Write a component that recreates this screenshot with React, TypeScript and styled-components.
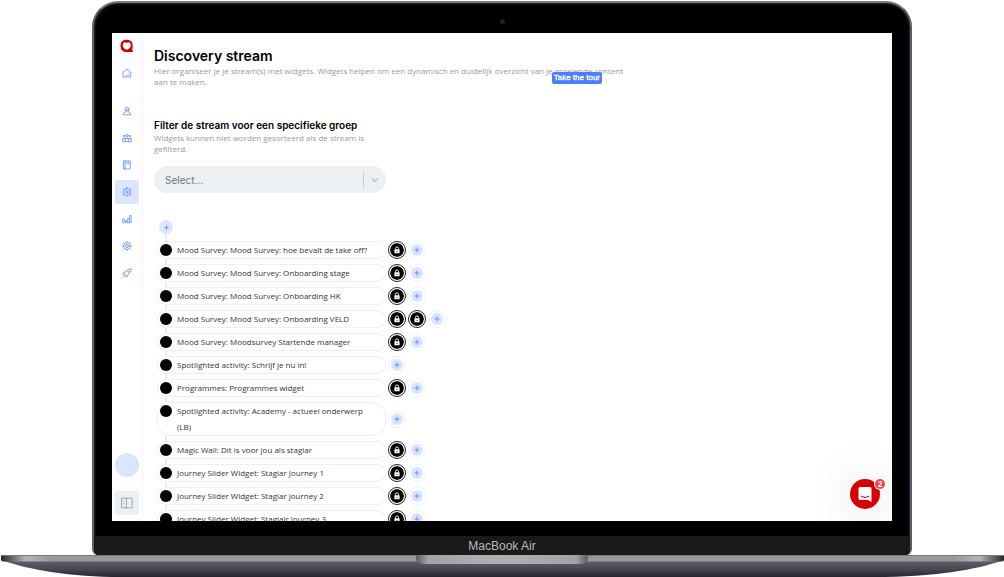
import React from "react";
import styled, { createGlobalStyle, css } from "styled-components";

const GlobalStyle = createGlobalStyle`
  *, *::before, *::after { box-sizing: border-box; }
  body {
    margin: 0;
    background: #fff;
    color: #000;
    font-family: Inter, "Open Sans", sans-serif;
    overflow: hidden;
  }
  h1, h2, p, ul { margin: 0; padding: 0; }
  button, select { font-family: inherit; }
`;

const Laptop = styled.div`
  padding-top: 1px;
`;

const Lid = styled.div`
  margin: 0 92px;
  overflow: hidden;
  background: #000;
  border: 2px solid #5d5e66;
  border-top-color: #77797d;
  border-bottom: 0;
  border-radius: 26px 26px 6px 6px;
  box-shadow: inset 0 0 2px 1px #2b2c31;
`;

const CameraBar = styled.div`
  display: flex;
  align-items: center;
  justify-content: center;
  height: 30px;
  padding-top: 7px;
`;

const Camera = styled.span`
  width: 5px;
  height: 5px;
  border-radius: 50%;
  background: #1d1f26;
`;

const Screen = styled.div`
  position: relative;
  display: grid;
  grid-template-columns: 31px minmax(0, 1fr);
  grid-template-rows: minmax(0, 1fr);
  margin: 0 18px 15px;
  aspect-ratio: 780 / 488;
  overflow: hidden;
  background: #fff;
`;

const Chin = styled.div`
  display: flex;
  align-items: center;
  justify-content: center;
  height: 19px;
  background: #1a1a1a;
  color: #b9b9bd;
  font: 12px/20px "Liberation Sans", sans-serif;
`;

const BaseArt = styled.svg`
  display: block;
  width: 100%;
  height: 22px;
`;

const Sidebar = styled.aside`
  display: flex;
  flex-direction: column;
  align-items: center;
  min-height: 0;
  padding: 6px 1px 6px 0;
  border-right: 1px solid #f6f6f9;
`;

const Logo = styled.a`
  display: flex;
  height: 16px;
  margin-bottom: 6px;
`;

const Nav = styled.nav`
  display: flex;
  flex-direction: column;
  gap: 3px;
`;

const NavButton = styled.a<{ $active?: boolean; $apart?: boolean }>`
  display: flex;
  align-items: center;
  justify-content: center;
  width: 24px;
  height: 24px;
  border-radius: 3px;
  color: #7b9cff;
  ${(p) => p.$active && css`background: #dbe5ff;`}
  ${(p) => p.$apart && css`margin-bottom: 11px;`}
`;

const SidebarFoot = styled.div`
  display: flex;
  flex-direction: column;
  gap: 14px;
  margin-top: auto;
`;

const Avatar = styled.button`
  width: 24px;
  height: 24px;
  padding: 0;
  border: 0;
  border-radius: 50%;
  background: #dbe5ff;
`;

const CollapseButton = styled.button`
  display: flex;
  align-items: center;
  justify-content: center;
  width: 24px;
  height: 24px;
  padding: 0;
  border: 0;
  border-radius: 3px;
  background: #ecf0f3;
  color: #9a9da1;
`;

const Main = styled.main`
  display: flex;
  flex-direction: column;
  align-items: flex-start;
  min-height: 0;
  padding: 13px 11px 0;
`;

const Title = styled.h1`
  font-size: 14px;
  font-weight: 600;
  line-height: 19px;
`;

const Intro = styled.div`
  position: relative;
  max-width: 476px;
  margin-bottom: 31px;
`;

const Note = styled.p`
  color: #999;
  font-family: "Open Sans", sans-serif;
  font-size: 8px;
  line-height: 11px;
`;

const TourButton = styled.button`
  position: absolute;
  right: 28px;
  bottom: 3px;
  height: 12px;
  padding: 0 2px;
  border: 0;
  border-radius: 2px;
  background: #4a7dff;
  color: #fff;
  font: 8px/12px "Liberation Sans", sans-serif;
  -webkit-text-stroke: 0.3px #fff;
  white-space: nowrap;
`;

const FilterBlock = styled.section`
  width: 232px;
  margin-bottom: 27px;
`;

const FilterTitle = styled.label`
  display: block;
  font-size: 10px;
  font-weight: 600;
  line-height: 14px;
  white-space: nowrap;
`;

const SelectWrap = styled.div`
  position: relative;
  margin-top: 12px;
`;

const Select = styled.select`
  display: block;
  width: 100%;
  height: 27px;
  padding: 0 30px 0 11px;
  border: 0;
  border-radius: 14px;
  appearance: none;
  background: #ecf0f3;
  color: #777;
  font-size: 10px;
`;

const SelectMark = styled.span`
  position: absolute;
  top: 5px;
  right: 0;
  display: flex;
  align-items: center;
  justify-content: center;
  width: 23px;
  height: 18px;
  border-left: 1px solid #ccc;
  color: #bbb;
  pointer-events: none;
`;

const Stream = styled.div`
  display: flex;
  flex-direction: column;
  align-items: flex-start;
  padding-left: 3px;
`;

const FirstAdd = styled.button`
  display: flex;
  align-items: center;
  justify-content: center;
  width: 14px;
  height: 14px;
  margin-left: 2px;
  padding: 0;
  border: 0;
  border-radius: 50%;
  background: #dbe5ff;
  color: #5b84ff;
`;

const Rows = styled.ul`
  list-style: none;
`;

const Row = styled.li`
  display: flex;
  align-items: center;
  gap: 2px;
`;

const PillColumn = styled.div`
  width: 229px;

  &::before {
    content: "";
    display: block;
    width: 2px;
    height: 5px;
    margin-left: 8px;
    background: #e3ebff;
  }

  li:first-child > &::before {
    height: 7px;
  }
`;

const Pill = styled.div`
  display: flex;
  gap: 5px;
  padding: 0 12px 0 2px;
  border: 1px solid #e9effe;
  border-radius: 14px;
  background: #fff;
  color: #333;
  font-family: "Open Sans", sans-serif;
  font-size: 8px;
  line-height: 16px;
`;

const Dot = styled.span`
  flex: none;
  width: 12px;
  height: 12px;
  margin-top: 2px;
  border-radius: 50%;
  background: #000;
`;

const RoundButton = styled.button<{ $locked?: boolean }>`
  display: flex;
  flex: none;
  align-items: center;
  justify-content: center;
  width: 18px;
  height: 18px;
  margin-top: 5px;
  border: 1px solid ${(p) => (p.$locked ? "#222" : "#eef3ff")};
  border-radius: 50%;
  background: ${(p) => (p.$locked ? "#000" : "#dbe5ff")};
  background-clip: content-box;
  box-shadow: inset 0 0 0 1px #fff;
  padding: ${(p) => (p.$locked ? "1px" : "2px")};
  color: ${(p) => (p.$locked ? "#fff" : "#6b90ff")};

  li:first-child > & {
    margin-top: 7px;
  }
`;

const Launcher = styled.button`
  position: absolute;
  right: 12px;
  bottom: 12px;
  display: flex;
  align-items: center;
  justify-content: center;
  width: 30px;
  height: 30px;
  padding: 0;
  border: 0;
  border-radius: 50%;
  background: #d60000;
  box-shadow: 0 1px 40px 10px rgba(0, 0, 0, 0.07);
`;

const Badge = styled.span`
  position: absolute;
  top: 0;
  right: -5px;
  width: 10px;
  height: 10px;
  border-radius: 50%;
  background: #ff3d47;
  box-shadow: 0 0 0 1px #fff;
  color: #fff;
  font: bold 8px/10px "Open Sans", sans-serif;
  text-align: center;
`;

const Stroke = ({ size = 10, children }: { size?: number; children: React.ReactNode }) => (
  <svg
    width={size}
    height={size}
    viewBox="0 0 20 20"
    fill="none"
    stroke="currentColor"
    strokeWidth="2"
    strokeLinejoin="round"
    strokeLinecap="round"
    aria-hidden
  >
    {children}
  </svg>
);

const PlusIcon = ({ size }: { size: number }) => (
  <svg width={size} height={size} viewBox="0 0 8 8" stroke="currentColor" strokeWidth="1.3" aria-hidden>
    <path d="M4 .5v7M.5 4h7" />
  </svg>
);

const LockIcon = () => (
  <svg width="8" height="8" viewBox="0 0 16 16" aria-hidden>
    <path d="M5 7V4.800a3 3 0 0 1 6 0V7" fill="none" stroke="currentColor" strokeWidth="1.800" />
    <rect x="2.800" y="6.600" width="10.400" height="8" rx="1" fill="currentColor" />
    <circle cx="8" cy="10.500" r="1.200" fill="#000" />
  </svg>
);

const navItems = [
  { name: "Home", apart: true, icon: <><path d="M2.500 8.500 10 2l7.500 6.500V18h-15z" /><path d="M14 9v6H7" strokeWidth="1.200" /></> },
  { name: "Users", icon: <><circle cx="10" cy="6.500" r="4" /><path d="M7 11v1.500c-3 .5-5 2-5 5h16c0-3-2-4.500-5-5V11M8 7.500h4" /></> },
  { name: "Groups", icon: <><circle cx="10" cy="5.500" r="2.500" /><circle cx="4" cy="6" r="1.500" /><circle cx="16" cy="6" r="1.500" /><path d="M1.500 16.500V11h17v5.500zM6.500 16v-5M13.500 16v-5" /></> },
  { name: "Library", icon: <><path d="M3.500 2h13v16h-13zM6 2v16" /><path d="M9.500 3v5l2-1.500 2 1.500V3" strokeWidth="1.600" /></> },
  { name: "Discovery stream", active: true, icon: <><path d="m10 1.500 2.500 3.300 4.300-.8-.8 4 2.500 2-2.500 2 .8 4-4.300-.8L10 18.500l-2.500-3.300-4.300.8.800-4-2.500-2L4 8l-.8-4 4.300.8z" /><circle cx="10" cy="10" r="2.500" /></> },
  { name: "Statistics", icon: <path d="M1.500 10h3v7.500h-3zM7 13h2.500v4.500H7zM12 8.500h2.500v9H12zM16 3h2.500v14.500H16z" strokeWidth="1.800" /> },
  { name: "Settings", icon: <><circle cx="10" cy="10" r="7" /><circle cx="10" cy="10" r="3" /><path d="M10 1v2M10 17v2M1 10h2M17 10h2M3.600 3.600 5 5M15 15l1.400 1.400M3.600 16.400 5 15M15 5l1.400-1.400" /></> },
  { name: "Launch", icon: <><path d="M18 2c-5 0-8 2-10.500 6L4 8.500 2 12l4 .5 1.500 1.500L8 18l3.500-2 .5-3.500C16 10 18 7 18 2z" /><circle cx="12.500" cy="7.500" r="1.200" strokeWidth="1.500" /><path d="m2 18 2.500-2.500" /></> },
];

const widgets = [
  { text: "Mood Survey: Mood Survey: hoe bevalt de take off?", locks: 1 },
  { text: "Mood Survey: Mood Survey: Onboarding stage", locks: 1 },
  { text: "Mood Survey: Mood Survey: Onboarding HK", locks: 1 },
  { text: "Mood Survey: Mood Survey: Onboarding VELD", locks: 2 },
  { text: "Mood Survey: Moodsurvey Startende manager", locks: 1 },
  { text: "Spotlighted activity: Schrijf je nu in!", locks: 0 },
  { text: "Programmes: Programmes widget", locks: 1 },
  { text: "Spotlighted activity: Academy - actueel onderwerp (LB)", locks: 0 },
  { text: "Magic Wall: Dit is voor jou als stagiar", locks: 1 },
  { text: "Journey Slider Widget: Stagiar Journey 1", locks: 1 },
  { text: "Journey Slider Widget: Stagiar journey 2", locks: 1 },
  { text: "Journey Slider Widget: Stagiair Journey 3", locks: 1 },
];

const LaptopBase = () => (
  <BaseArt viewBox="0 0 1004 22" preserveAspectRatio="none" aria-hidden>
    <defs>
      <linearGradient id="under" x1="0" y1="0" x2="0" y2="1">
        <stop offset="0" stopColor="#60616a" />
        <stop offset="0.5" stopColor="#494a55" />
        <stop offset="1" stopColor="#25262f" />
      </linearGradient>
      <linearGradient id="deck" x1="0" y1="0" x2="1" y2="0">
        <stop offset="0" stopColor="#24252b" />
        <stop offset="0.008" stopColor="#55565d" />
        <stop offset="0.024" stopColor="#b4b4b9" />
        <stop offset="0.05" stopColor="#97989e" />
        <stop offset="0.95" stopColor="#97989e" />
        <stop offset="0.976" stopColor="#b4b4b9" />
        <stop offset="0.992" stopColor="#55565d" />
        <stop offset="1" stopColor="#24252b" />
      </linearGradient>
      <linearGradient id="notch" x1="0" y1="0" x2="1" y2="0">
        <stop offset="0" stopColor="#5b5b61" />
        <stop offset="0.07" stopColor="#a3a3a8" />
        <stop offset="0.5" stopColor="#b0b0b4" />
        <stop offset="0.93" stopColor="#a3a3a8" />
        <stop offset="1" stopColor="#5b5b61" />
      </linearGradient>
    </defs>
    <path d="M1 5h1003c-28 10-70 17-130 17H121C71 22 29 15 1 5z" fill="url(#under)" />
    <path d="M1 0h1003v5.500l-2 1H3l-2-1z" fill="url(#deck)" />
    <path d="M1 .5h1003" stroke="#77787e" />
    <path d="M416 0h172v3c0 4-3 6-9 6H425c-6 0-9-2-9-6z" fill="url(#notch)" />
  </BaseArt>
);

export default function App() {
  return (
    <Laptop>
      <GlobalStyle />
      <Lid>
        <CameraBar><Camera /></CameraBar>
        <Screen>
          <Sidebar>
            <Logo href="#" aria-label="Start">
              <svg width="14" height="14" viewBox="0 0 28 28" aria-hidden>
                <path d="M13 1.500C5 1.500 1 6 1 13.500S5 26 13 26h12.500v-4L24 20.500c1.300-2 1.500-4.500 1.500-7 0-7.500-4-12-12.500-12z" fill="#d60000" />
                <path d="M13.500 21.500C8 20 5.500 16.500 5.500 12c0-5 5.500-7 8-3.500 2.500-3.500 8-1.500 8 3.500 0 4.500-2.500 8-8 9.500z" fill="#fff" />
              </svg>
            </Logo>
            <Nav>
              {navItems.map((item) => (
                <NavButton key={item.name} href="#" aria-label={item.name} $active={item.active} $apart={item.apart}>
                  <Stroke>{item.icon}</Stroke>
                </NavButton>
              ))}
            </Nav>
            <SidebarFoot>
              <Avatar aria-label="Profile" />
              <CollapseButton aria-label="Collapse sidebar">
                <Stroke size={12}>
                  <path d="M1.500 2h17v16h-17zM9 2v16M4.500 7v.5M4.500 11v.5" strokeWidth="1.500" />
                </Stroke>
              </CollapseButton>
            </SidebarFoot>
          </Sidebar>
          <Main>
            <Title>Discovery stream</Title>
            <Intro>
              <Note>
                Hier organiseer je je stream(s) met widgets. Widgets helpen om een dynamisch en duidelijk overzicht van je
                groeiende content aan te maken.
              </Note>
              <TourButton>Take the tour</TourButton>
            </Intro>
            <FilterBlock>
              <FilterTitle htmlFor="group">Filter de stream voor een specifieke groep</FilterTitle>
              <Note>Widgets kunnen niet worden gesorteerd als de stream is gefilterd.</Note>
              <SelectWrap>
                <Select id="group" defaultValue="">
                  <option value="">Select...</option>
                </Select>
                <SelectMark>
                  <svg width="8" height="6" viewBox="0 0 8 6" fill="none" stroke="currentColor" strokeWidth="1.200" aria-hidden>
                    <path d="m1 1.500 3 3 3-3" />
                  </svg>
                </SelectMark>
              </SelectWrap>
            </FilterBlock>
            <Stream>
              <FirstAdd aria-label="Add widget"><PlusIcon size={5} /></FirstAdd>
              <Rows>
                {widgets.map((widget) => (
                  <Row key={widget.text}>
                    <PillColumn>
                      <Pill>
                        <Dot />
                        <span>{widget.text}</span>
                      </Pill>
                    </PillColumn>
                    {Array.from({ length: widget.locks }, (_, i) => (
                      <RoundButton key={i} $locked aria-label="Locked"><LockIcon /></RoundButton>
                    ))}
                    <RoundButton aria-label="Add group"><PlusIcon size={6} /></RoundButton>
                  </Row>
                ))}
              </Rows>
            </Stream>
          </Main>
          <Launcher aria-label="Open chat">
            <svg width="14" height="15" viewBox="0 0 14 15" aria-hidden>
              <path d="M2 0h10q1.500 0 1.500 1.500V15L10 13H2Q.5 13 .5 11.500v-10Q.5 0 2 0z" fill="#fff" />
              <path d="M3 9.300q4 2.700 8 0" fill="none" stroke="#d60000" strokeLinecap="round" />
            </svg>
            <Badge>2</Badge>
          </Launcher>
        </Screen>
        <Chin>MacBook Air</Chin>
      </Lid>
      <LaptopBase />
    </Laptop>
  );
}
